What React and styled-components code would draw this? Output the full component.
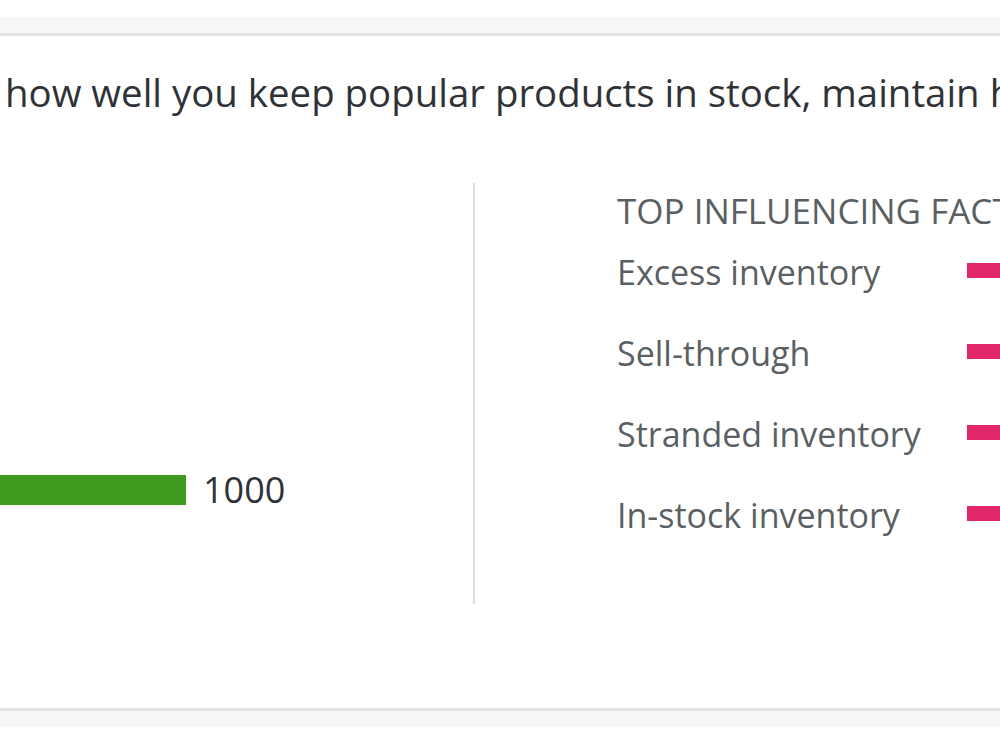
import React from "react";
import styled, { createGlobalStyle } from "styled-components";

const Global = createGlobalStyle`
  html, body { margin: 0; padding: 0; background: #ffffff; }
  body { font-family: "Open Sans", "Liberation Sans", sans-serif; overflow: hidden; }
`;

const Page = styled.div`
  width: 1000px;
  height: 749px;
  overflow: hidden;
  display: flex;
  flex-direction: column;
  background: #ffffff;
`;

const Band = styled.div`
  height: ${(p) => p.$h}px;
  background: ${(p) => p.$bg};
  flex-shrink: 0;
`;

const Card = styled.section`
  height: 672px;
  border-top: 3px solid #e2e2e2;
  border-bottom: 3px solid #e2e2e2;
  background: #ffffff;
  display: flex;
  flex-direction: column;
  flex-shrink: 0;
  overflow: hidden;
`;

const Description = styled.p`
  margin: 32px 0 0 5px;
  font-size: 38.4px;
  line-height: 48px;
  color: #2f3337;
  white-space: nowrap;
`;

const Body = styled.div`
  display: grid;
  grid-template-columns: 473px 2px 1fr;
  margin-top: 67px;
  height: 421px;
`;

const ScoreColumn = styled.div`
  display: flex;
  align-items: flex-start;
  padding-top: 292px;
`;

const ScoreRow = styled.div`
  display: flex;
  align-items: center;
  gap: 17px;
`;

const ScoreBar = styled.div`
  width: 186px;
  height: 30px;
  background: #3f9b1c;
`;

const ScoreValue = styled.span`
  font-size: 36px;
  line-height: 30px;
  color: #2f3337;
`;

const Divider = styled.div`
  background: #dcdcdc;
`;

const Factors = styled.div`
  padding: 8px 0 0 142px;
  display: flex;
  flex-direction: column;
`;

const FactorsTitle = styled.h3`
  margin: 0;
  font-size: 35px;
  font-weight: 400;
  line-height: 40px;
  color: #5a5f63;
  white-space: nowrap;
`;

const FactorRow = styled.div`
  display: grid;
  grid-template-columns: 350px 200px;
  align-items: center;
  height: 81px;
`;

const FactorLabel = styled.span`
  font-size: 34px;
  color: #5a5f63;
  white-space: nowrap;
`;

const FactorBar = styled.div`
  height: 15px;
  background: #e2266a;
  margin-top: -3px;
`;

const factors = [
  "Excess inventory",
  "Sell-through",
  "Stranded inventory",
  "In-stock inventory",
];

export default function App() {
  return (
    <Page>
      <Global />
      <Band $h={17} $bg="#ffffff" />
      <Band $h={16} $bg="#f7f7f7" />
      <Card>
        <Description>
          how well you keep popular products in stock, maintain healthy inventory levels
        </Description>
        <Body>
          <ScoreColumn>
            <ScoreRow>
              <ScoreBar />
              <ScoreValue>1000</ScoreValue>
            </ScoreRow>
          </ScoreColumn>
          <Divider />
          <Factors>
            <FactorsTitle>TOP INFLUENCING FACTORS</FactorsTitle>
            {factors.map((f) => (
              <FactorRow key={f}>
                <FactorLabel>{f}</FactorLabel>
                <FactorBar />
              </FactorRow>
            ))}
          </Factors>
        </Body>
      </Card>
      <Band $h={16} $bg="#f7f7f7" />
      <Band $h={30} $bg="#ffffff" />
    </Page>
  );
}
